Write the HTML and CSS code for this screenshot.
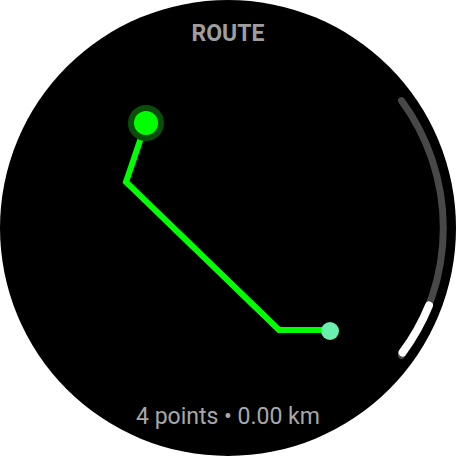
FILE: index.html
```html
<!DOCTYPE html>
<html>
<head>
<meta charset="utf-8">
<link rel="stylesheet" href="styles.css">
</head>
<body>
<div class="watch">
  <svg class="canvas" width="456" height="456" viewBox="0 0 456 456">
    <path class="track" d="M 401.5 100.6 A 215 215 0 0 1 401.5 355.4" />
    <path class="thumb" d="M 429 305.5 A 215 215 0 0 1 402.5 352.5" />
    <polyline class="route" points="146,123 126,182 279,330 330,330" />
    <circle class="halo" cx="146" cy="123" r="18" />
    <circle class="start" cx="146" cy="123" r="12" />
    <circle class="end" cx="330" cy="331" r="9" />
  </svg>
  <div class="title">ROUTE</div>
  <div class="spacer"></div>
  <div class="summary">4 points • 0.00 km</div>
</div>
</body>
</html>
```
FILE: styles.css
```css
html, body {
  margin: 0;
  padding: 0;
  background: #ffffff;
}
.watch {
  position: relative;
  width: 456px;
  height: 456px;
  border-radius: 50%;
  background: #000000;
  overflow: hidden;
  display: flex;
  flex-direction: column;
  align-items: center;
  font-family: Roboto, "Noto Sans", sans-serif;
}
.canvas {
  position: absolute;
  left: 0;
  top: 0;
}
.track {
  fill: none;
  stroke: #484848;
  stroke-width: 7;
  stroke-linecap: round;
}
.thumb {
  fill: none;
  stroke: #ffffff;
  stroke-width: 8;
  stroke-linecap: round;
}
.route {
  fill: none;
  stroke: #00ff00;
  stroke-width: 6;
  stroke-linejoin: miter;
}
.halo {
  fill: #0b4d0b;
}
.start {
  fill: #00ff00;
}
.end {
  fill: #69f0ae;
}
.title {
  position: relative;
  margin-top: 20px;
  font-size: 23px;
  font-weight: 700;
  color: #9e9e9e;
  line-height: 28px;
}
.spacer {
  flex: 1;
}
.summary {
  position: relative;
  margin-bottom: 25px;
  font-size: 23px;
  color: #a8a8a8;
  line-height: 28px;
}
```
